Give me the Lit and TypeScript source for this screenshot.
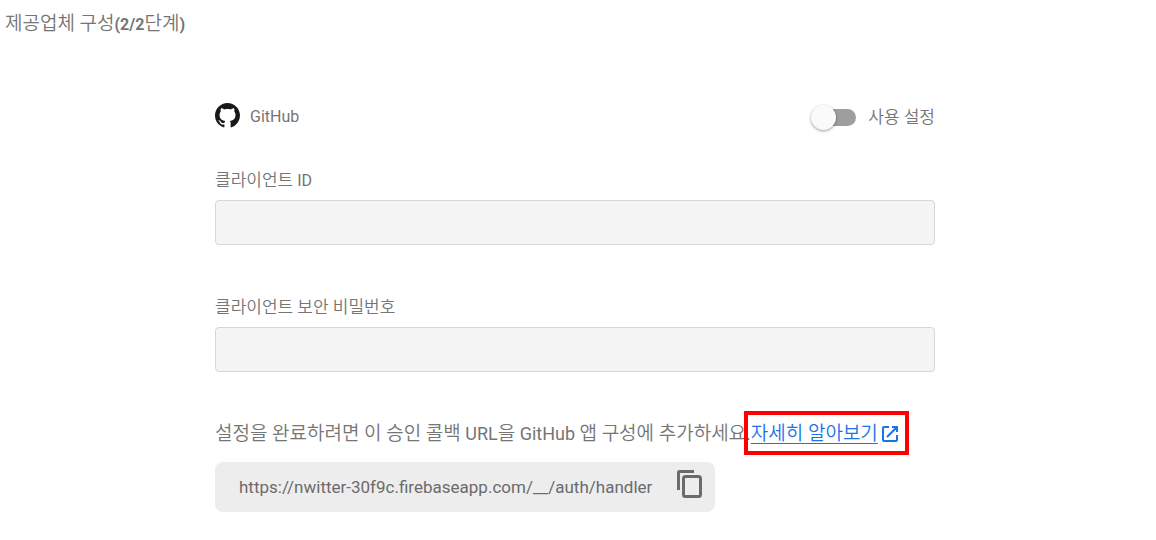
import { LitElement, html, css } from "lit";
import { customElement, state } from "lit/decorators.js";

const CALLBACK_URL = "https://nwitter-30f9c.firebaseapp.com/__/auth/handler";

@customElement("app-root")
export class AppRoot extends LitElement {
  @state() private enabled = false;

  static styles = css`
    :host {
      display: block;
      min-height: 100vh;
      box-sizing: border-box;
      padding: 0 11px 24px 5px;
      background: #fff;
      color: #757575;
      font-family: Roboto, "Noto Sans CJK KR", sans-serif;
      font-size: 16px;
      line-height: 24px;
    }
    * {
      box-sizing: border-box;
    }
    h1 {
      margin: 0;
      padding-top: 12px;
      font-size: 19px;
      font-weight: 350;
      line-height: 24px;
    }
    .strong {
      font-size: 16px;
      font-weight: 700;
    }
    .ko {
      font-size: 17px;
      font-weight: 350;
    }
    .panel {
      max-width: 720px;
      margin: 65px auto 0;
    }
    .head {
      display: flex;
      align-items: center;
      justify-content: space-between;
      height: 30px;
    }
    .provider,
    .toggle {
      display: flex;
      align-items: center;
      gap: 10px;
    }
    .toggle {
      gap: 12px;
    }
    .github {
      width: 25px;
      height: 25px;
      margin-bottom: 4px;
      fill: #191717;
    }
    .switch {
      appearance: none;
      position: relative;
      width: 42px;
      height: 17px;
      margin: 0;
      border-radius: 9px;
      background: #9e9e9e;
      cursor: pointer;
    }
    .switch::before {
      content: "";
      position: absolute;
      top: -4px;
      left: -3px;
      width: 25px;
      height: 25px;
      border-radius: 50%;
      background: #fafafa;
      box-shadow: 0 1px 3px rgba(0, 0, 0, 0.4);
    }
    .switch:checked::before {
      left: 20px;
    }
    .field {
      display: flex;
      flex-direction: column;
      gap: 7px;
      margin-top: 36px;
    }
    .field + .field {
      margin-top: 50px;
    }
    .text {
      width: 100%;
      height: 45px;
      padding: 0 12px;
      border: 1px solid #d6d6d6;
      border-radius: 4px;
      background: #f4f4f4;
      color: inherit;
      font: inherit;
    }
    .note {
      margin: 50px 0 0;
      font-size: 18px;
      line-height: 24px;
      white-space: nowrap;
    }
    .note .ko,
    .more {
      font-size: 19px;
      font-weight: 350;
    }
    .more {
      position: relative;
      display: inline-flex;
      align-items: center;
      gap: 3px;
      color: #1a73e8;
      text-decoration: none;
    }
    .more .label {
      text-decoration: underline;
      text-underline-offset: 3px;
    }
    .more::after {
      content: "";
      position: absolute;
      inset: -11px -10px -9px -7px;
      border: 4px solid #f00;
      pointer-events: none;
    }
    .open {
      width: 18px;
      height: 18px;
    }
    .callback {
      display: flex;
      align-items: center;
      justify-content: space-between;
      width: 500px;
      max-width: 100%;
      height: 50px;
      margin-top: 16px;
      padding: 0 12px 0 24px;
      border-radius: 8px;
      background: #ededed;
      font-size: 17px;
      color: #6b6b6b;
      white-space: nowrap;
    }
    .copy {
      display: flex;
      margin: 0;
      padding: 0 0 6px;
      border: 0;
      background: none;
      color: inherit;
      cursor: pointer;
    }
    .copy svg {
      width: 28px;
      height: 30px;
    }
  `;

  private toggle(e: Event) {
    this.enabled = (e.target as HTMLInputElement).checked;
  }

  private copy() {
    navigator.clipboard?.writeText(CALLBACK_URL);
  }

  render() {
    return html`
      <h1>제공업체 구성<span class="strong">(2/2</span>단계<span class="strong">)</span></h1>
      <main class="panel">
        <div class="head">
          <div class="provider">
            <svg class="github" viewBox="0 0 16 16" aria-hidden="true">
              <path d="M8 0C3.58 0 0 3.58 0 8c0 3.54 2.29 6.53 5.47 7.59.4.07.55-.17.55-.38 0-.19-.01-.82-.01-1.49-2.01.37-2.53-.49-2.69-.94-.09-.23-.48-.94-.82-1.13-.28-.15-.68-.52-.01-.53.63-.01 1.08.58 1.23.82.72 1.21 1.87.87 2.33.66.07-.52.28-.87.51-1.07-1.78-.2-3.64-.89-3.64-3.95 0-.87.31-1.59.82-2.15-.08-.2-.36-1.02.08-2.12 0 0 .67-.21 2.2.82.64-.18 1.32-.27 2-.27s1.36.09 2 .27c1.53-1.04 2.2-.82 2.2-.82.44 1.1.16 1.92.08 2.12.51.56.82 1.27.82 2.15 0 3.07-1.87 3.75-3.65 3.95.29.25.54.73.54 1.48 0 1.07-.01 1.93-.01 2.2 0 .21.15.46.55.38A8.01 8.01 0 0 0 16 8c0-4.42-3.58-8-8-8z" />
            </svg>
            <span>GitHub</span>
          </div>
          <label class="toggle">
            <input class="switch" type="checkbox" .checked=${this.enabled} @change=${this.toggle} />
            <span class="ko">사용 설정</span>
          </label>
        </div>
        <div class="field">
          <label for="client-id"><span class="ko">클라이언트</span> ID</label>
          <input class="text" id="client-id" type="text" />
        </div>
        <div class="field">
          <label for="client-secret"><span class="ko">클라이언트 보안 비밀번호</span></label>
          <input class="text" id="client-secret" type="text" />
        </div>
        <p class="note">
          <span class="ko">설정을 완료하려면 이 승인 콜백</span> URL<span class="ko">을</span> GitHub
          <span class="ko">앱 구성에 추가하세요</span>.<a class="more" href="#"
            ><span class="label">자세히 알아보기</span
            ><svg class="open" viewBox="0 0 18 18" fill="none" stroke="currentColor" stroke-width="2" aria-hidden="true">
              <path d="M8 2H3a1 1 0 0 0-1 1v12a1 1 0 0 0 1 1h12a1 1 0 0 0 1-1v-5M11 2h5v5M16 2L6 12" /></svg
          ></a>
        </p>
        <div class="callback">
          <span>${CALLBACK_URL}</span>
          <button class="copy" aria-label="복사" @click=${this.copy}>
            <svg viewBox="0 0 28 30" fill="none" stroke="currentColor" stroke-width="3" aria-hidden="true">
              <path d="M3.5 21V3.5a1 1 0 0 1 1-1H19" />
              <rect x="8.5" y="7.5" width="17" height="20" rx="2" />
            </svg>
          </button>
        </div>
      </main>
    `;
  }
}
